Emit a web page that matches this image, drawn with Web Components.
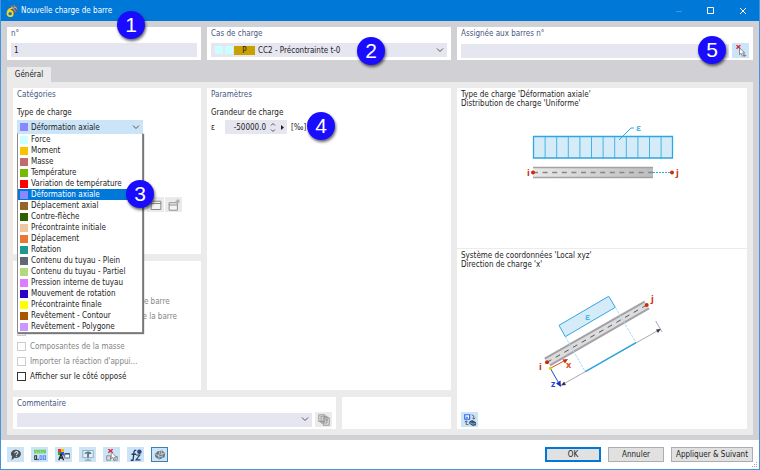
<!DOCTYPE html>
<html lang="fr">
<head>
<meta charset="utf-8">
<title>Nouvelle charge de barre</title>
<style>
  body {
    margin: 0;
    font: 8px/11px "DejaVu Sans Condensed", "Noto Sans", sans-serif;
    color: #1c1c1c;
  }
</style>
</head>
<body>
<load-dialog></load-dialog>

<script>
const ICONS = {
  app: `<path d="M5 3l4-3 6 2 1 5-4 4-5-3z" fill="#5a616b"/><path d="M7 1l6 8M10 0l5 6M5 5l9-2" stroke="#b9bec8"/><path d="M7 3C3 4 1 7 1 10.500a3.500 3.500 0 1 0 3.500-3.500C3 7 2 8 1.500 9" transform="translate(1 1)" fill="none" stroke="#ffd21f" stroke-width="2.400"/>`,
  pick: `<path d="M2 0l5 5M7 0L2 5" stroke="#e0263a" stroke-width="1.800"/><path d="M6 4v9l2-2 2 4 2-1-2-3.500h3z" fill="#fff" stroke="#6b6b6b"/><path d="M11 14h4M13 12v4" stroke="#777"/>`,
  help: `<path d="M8.500 1a6 5.500 0 1 1-2.500 10.500L2 15l.8-5A6 5.500 0 0 1 8.500 1z" fill="#4b5157"/><path d="M6.500 5.500c0-3 4.500-2.500 4 0-.3 1-2 1-2 2.500M8.500 9v1.300" fill="none" stroke="#e9f2f8" stroke-width="1.400"/>`,
  units: `<path d="M0 1h16v5H0z" fill="#74cf67"/><path d="M3 3v3M6 4v2M9 3v3M12 4v2" stroke="#b5ecae"/><path d="M1 9h2.500v5H1zM5.500 13v2" fill="none" stroke="#333" stroke-width="1.400"/><path d="M8 9h2.500v5H8zM12.800 9h2.500v5h-2.500z" fill="none" stroke="#5b8ef5" stroke-width="1.400"/>`,
  palette: `<path d="M0 0h4v4H0z" fill="#e33"/><path d="M4 0h4v4H4z" fill="#fb0"/><path d="M0 4h4v4H0z" fill="#2a3"/><path d="M4 4h4v4H4z" fill="#35e"/><path d="M1 15l3-8 3.500 8M2 12h5" fill="none" stroke="#222" stroke-width="1.700"/><path d="M9 6h6.500v6H9z" fill="#fff" stroke="#445"/><path d="M9 6.500h6.500" stroke="#358" stroke-width="2"/><path d="M6 9h3" stroke="#445"/>`,
  display: `<path d="M1 2h14v9.500H1z" fill="#e4eff6" stroke="#8497a5"/><path d="M8 12v3M4 15h8" stroke="#8497a5" stroke-width="1.300"/><path d="M3 7c1-4 7-5 10-1l-3 1c-2-2-5-1-7 0z" fill="#4c7e9f"/><path d="M8 6v5" stroke="#345" stroke-width="1.800"/>`,
  results: `<path d="M3 0l6 5M9 0L3 5" stroke="#e0263a" stroke-width="1.800"/><path d="M1 9h5v6H1zM10 10h5v5h-5z" fill="#ddd" stroke="#777"/><path d="M7 4v9l2-2 2 4 1.500-1-1.500-3h3z" fill="#fff" stroke="#777"/>`,
  formula: `<path d="M8.500 2C4 0 5.500 8 4 15H1M2 7h6" fill="none" stroke="#223a60" stroke-width="1.700"/><path d="M8 8h5l-5 6.500h6" fill="none" stroke="#223a60" stroke-width="1.500"/><circle cx="12.500" cy="3.500" r="3" fill="#34447c"/>`,
  render: `<path d="M1 7l4-4 6-1 4 4-1 5-7 3-5-3z" fill="#6a727a"/><path d="M2 7l4 2 1 4M6 9l2-6M6 9l6 2M8 7l6-1M10 3l1 6" fill="none" stroke="#dfe8ee"/>`,
  open: `<path d="M1.500 3h13v11h-13zM1.500 6h13" fill="#f4f4f4" stroke="#858585" stroke-width="1.300"/>`,
  create: `<path d="M1.500 5h11v10h-11zM1.500 8h11" fill="#f4f4f4" stroke="#8d8d8d" stroke-width="1.300"/><path d="M13 0v6M10 3h6M11 1l4 4M15 1l-4 4" stroke="#a2a2a2"/>`,
  copy: `<path d="M1 1h8v9H1zM4 3h8v9H4zM7 5h8v10H7z" fill="#dcdcdc" stroke="#858585"/><path d="M9 8h4" stroke="#858585"/>`,
  swap: `<path d="M1 1h6.500v6H1z" fill="#fff" stroke="#2f66f2" stroke-width="1.600"/><path d="M2 6l2-3 2 3z" fill="#2f66f2"/><path d="M10 1l3 1.500v4M11 5l2 2 2-2M3 9v5h3M1 11l2-2 2 2" fill="none" stroke="#444"/><path d="M7 10l4-2 5 3v4l-4 1-5-3z" fill="#36527c"/><path d="M8 11.500l4 2 3-1" stroke="#b4c8df"/>`
};

const CHEVRON = `<svg class="chevron" viewBox="0 0 8 5" width="8" height="5"><path d="M1 .5l3 3 3-3" fill="none" stroke="#555"/></svg>`;

const LOAD_TYPES = [
  ['Force', '#ccffff'],
  ['Moment', '#f8c200'],
  ['Masse', '#bf6d6d'],
  ['Température', '#77b900'],
  ['Variation de température', '#ff0000'],
  ['Déformation axiale', '#8a88ff'],
  ['Déplacement axial', '#94622a'],
  ['Contre-flèche', '#2f6000'],
  ['Précontrainte initiale', '#efc69e'],
  ['Déplacement', '#ea7633'],
  ['Rotation', '#1f998d'],
  ['Contenu du tuyau - Plein', '#616872'],
  ['Contenu du tuyau - Partiel', '#b2da7c'],
  ['Pression interne de tuyau', '#e07aff'],
  ['Mouvement de rotation', '#2c00c8'],
  ['Précontrainte finale', '#ffff00'],
  ['Revêtement - Contour', '#a65700'],
  ['Revêtement - Polygone', '#c898ff']
];

const FIELD_CSS = `
  * { box-sizing: border-box; }
  input, select {
    appearance: none;
    flex: 1;
    min-width: 0;
    height: 14px;
    margin: 0;
    padding: 0 3px;
    border: 0;
    border-radius: 0;
    outline: 0;
    background: #e6e6f1;
    color: inherit;
    font: inherit;
  }
  .field { display: flex; align-items: center; height: 14px; background: #e6e6f1; }
  .field select { background: transparent; }
  .chevron { flex: none; margin-right: 3px; }
`;

class GroupCard extends HTMLElement {
  constructor() {
    super();
    this.attachShadow({ mode: 'open' });
  }

  connectedCallback() {
    const heading = this.getAttribute('heading');
    this.shadowRoot.innerHTML = `
      <style>
        :host { display: block; padding: 1px 4px 3px; background: #fff; }
        h2 { margin: 0 0 3px; font: inherit; color: #46587f; }
      </style>
      ${heading ? `<h2>${heading}</h2>` : ''}
      <slot></slot>
    `;
  }
}

class IconButton extends HTMLElement {
  constructor() {
    super();
    this.attachShadow({ mode: 'open' });
  }

  connectedCallback() {
    const disabled = this.hasAttribute('disabled');
    this.shadowRoot.innerHTML = `
      <style>
        :host { display: block; flex: none; }
        button {
          display: grid;
          place-items: center;
          box-sizing: border-box;
          width: 17px;
          height: 15px;
          padding: 0;
          border: 0;
          background: #cce4f7;
        }
        button:disabled { background: #ebebeb; }
        :host([pressed]) button { border: 1px solid #3c7fb1; }
        svg { display: block; }
      </style>
      <button type="button" aria-label="${this.getAttribute('label')}" ${disabled ? 'disabled' : ''}>
        <svg viewBox="0 0 16 16" width="12" height="12" fill="none">${ICONS[this.getAttribute('icon')]}</svg>
      </button>
    `;
  }
}

class PushButton extends HTMLElement {
  constructor() {
    super();
    this.attachShadow({ mode: 'open' });
    this.shadowRoot.innerHTML = `
      <style>
        :host { display: block; }
        button {
          box-sizing: border-box;
          min-width: 56px;
          height: 15px;
          padding: 0 4px;
          border: 1px solid #adadad;
          background: #e1e1e1;
          color: inherit;
          font: inherit;
          white-space: nowrap;
        }
        :host([default]) button { border-color: #0078d7; outline: 1px solid #0078d7; outline-offset: -2px; }
      </style>
      <button type="button"><slot></slot></button>
    `;
  }
}

class CheckRow extends HTMLElement {
  constructor() {
    super();
    this.attachShadow({ mode: 'open' });
  }

  connectedCallback() {
    const disabled = this.hasAttribute('disabled');
    this.shadowRoot.innerHTML = `
      <style>
        :host { display: block; height: 15px; }
        label { display: flex; align-items: center; gap: 4px; height: 15px; white-space: nowrap; }
        input {
          appearance: none;
          box-sizing: border-box;
          width: 9px;
          height: 9px;
          margin: 0;
          border: 1px solid #333;
          background: #fff;
        }
        :host([disabled]) label { color: #858585; }
        :host([disabled]) input { border-color: #ccc; }
      </style>
      <label><input type="checkbox" ${disabled ? 'disabled' : ''}><slot></slot></label>
    `;
  }
}

class TypeSelect extends HTMLElement {
  constructor() {
    super();
    this.attachShadow({ mode: 'open' });
  }

  connectedCallback() {
    const value = this.getAttribute('value');
    const color = LOAD_TYPES.find(([name]) => name === value)[1];
    this.shadowRoot.innerHTML = `
      <style>
        ${FIELD_CSS}
        :host { display: block; }
        label { display: block; margin-bottom: 2px; }
        .box { position: relative; width: 126px; }
        .field { background: #cce4f7; }
        .swatch { flex: none; width: 8px; height: 8px; margin: 0 0 0 3px; }
        ul {
          position: absolute;
          z-index: 2;
          top: 13px;
          left: 0;
          width: 126px;
          margin: 0;
          padding: 0;
          border: 1px solid #8a8a8a;
          border-top-color: #cce4f7;
          background: #fff;
          box-shadow: 1px 1px 1px #777;
          list-style: none;
        }
        li { display: flex; align-items: center; gap: 3px; height: 11px; white-space: nowrap; }
        li .swatch { margin-left: 2px; }
        li[aria-selected="true"] { background: #0078d7; color: #fff; }
      </style>
      <label for="type">Type de charge</label>
      <div class="box">
        <div class="field">
          <span class="swatch" style="background:${color}"></span>
          <select id="type"><option>${value}</option></select>
          ${CHEVRON}
        </div>
        <ul role="listbox" aria-label="Type de charge">
          ${LOAD_TYPES.map(([name, c]) => `
            <li role="option" aria-selected="${name === value}"><span class="swatch" style="background:${c}"></span>${name}</li>
          `).join('')}
        </ul>
      </div>
    `;
  }
}

class CallOut extends HTMLElement {
  constructor() {
    super();
    this.attachShadow({ mode: 'open' });
    this.shadowRoot.innerHTML = `
      <style>
        :host {
          position: absolute;
          z-index: 5;
          display: grid;
          place-items: center;
          width: 28px;
          height: 28px;
          border-radius: 50%;
          background: #1a0dff;
          box-shadow: 1px 2px 3px rgba(0, 0, 0, .6);
          color: #fff;
          font: 21px/28px "Liberation Sans", Arial, sans-serif;
        }
      </style>
      <slot></slot>
    `;
  }
}

class UniformFigure extends HTMLElement {
  constructor() {
    super();
    this.attachShadow({ mode: 'open' });
    const cells = Array.from({ length: 11 }, (_, i) => `M${11.5 + (i + 1) * 11.6} 14.500v21.500`).join('');
    this.shadowRoot.innerHTML = `
      <style>
        :host { display: block; }
        svg { display: block; margin: 0 auto; }
        text { font: bold 9px "Open Sans", sans-serif; }
      </style>
      <svg width="160" height="68" viewBox="0 -6 160 68">
        <defs>
          <linearGradient id="steel"><stop offset="0" stop-color="#e8e8e8"/><stop offset="1" stop-color="#bdbdbd"/></linearGradient>
        </defs>
        <path d="M11.500 14.500h139v21.500h-139z" fill="#d5ecf8"/>
        <path d="${cells}" stroke="#45b3e6"/>
        <path d="M11.500 14.500h139v21.500h-139z" fill="none" stroke="#2ea7e0" stroke-width="1.300"/>
        <path d="M97 18L109 6h3" fill="none" stroke="#2ea7e0"/>
        <text x="114" y="9" fill="#45b3e6">ε</text>
        <path d="M11 45h120v11H11z" fill="url(#steel)"/>
        <path d="M11 45.500h120M11 55.500h120" stroke="#a2a2a6" stroke-width="1.500"/>
        <path d="M11 50.500h120" stroke="#85858c" stroke-width="1.500" stroke-dasharray="5 4.600"/>
        <path d="M131 50.500h19" stroke="#2ea7e0" stroke-dasharray="2 1"/>
        <circle cx="11" cy="50.500" r="2" fill="#cc2b0a"/>
        <circle cx="150" cy="50.500" r="2" fill="#cc2b0a"/>
        <text x="5" y="54" fill="#cc2b0a">i</text>
        <text x="154" y="54" fill="#cc2b0a">j</text>
      </svg>
    `;
  }
}

class DirectionFigure extends HTMLElement {
  constructor() {
    super();
    this.attachShadow({ mode: 'open' });
    this.shadowRoot.innerHTML = `
      <style>
        :host { display: block; }
        svg { display: block; margin: 0 auto; }
        text { font: bold 9px "Open Sans", sans-serif; }
      </style>
      <svg width="140" height="110" viewBox="0 0 140 110" fill="none">
        <path d="M27 40.300L76.700 11.300l6.600 11-50 29.400z" fill="#d5ecf8" stroke="#2ea7e0"/>
        <text x="53" y="35" fill="#45b3e6">ε</text>
        <path d="M12.700 73.700l100-57 4.300 6.600-99 57z" fill="#dcdcdc"/>
        <path d="M12.700 73.700l100-57M18 80.300l99-57" stroke="#a2a2a8" stroke-width="2"/>
        <path d="M15 77.300L114.700 20" stroke="#55555f" stroke-dasharray="5 5"/>
        <path d="M33.300 51.700l20 35M83.300 22.300l20.700 35.400" stroke="#a9dbf3" stroke-dasharray="3 1"/>
        <path d="M29.700 100l99-56M123.700 36l6.300 11" stroke="#a9a9b0"/>
        <path d="M53.300 86.700l50.700-29" stroke="#2ea7e0" stroke-width="1.500"/>
        <path d="M128.700 44l-4.700.5 2 3.500zM29 100.500l3-4 2 3.500z" fill="#333348"/>
        <path d="M18.300 83.300l14-7.500" stroke="#e04a1c"/>
        <path d="M36 74l-5.500.500 2.500 4z" fill="#cc2b0a"/>
        <path d="M18.300 83.300l8 14" stroke="#2343d6"/>
        <path d="M29 102l-.5-6.500-4.500 3z" fill="#1a2fc0"/>
        <circle cx="15" cy="77.300" r="2" fill="#cc2b0a"/>
        <circle cx="114.700" cy="20" r="2" fill="#cc2b0a"/>
        <circle cx="18.300" cy="83.300" r="1.500" fill="#d7d700"/>
        <text x="7" y="85" fill="#cc2b0a">i</text>
        <text x="119" y="17" fill="#cc2b0a">j</text>
        <text x="34" y="83" fill="#e04a1c">x</text>
        <text x="19" y="102" fill="#2343d6">z</text>
      </svg>
    `;
  }
}

class LoadDialog extends HTMLElement {
  constructor() {
    super();
    this.attachShadow({ mode: 'open' });
    this.shadowRoot.innerHTML = `
      <style>
        ${FIELD_CSS}
        :host {
          position: relative;
          display: flex;
          flex-direction: column;
          box-sizing: border-box;
          min-height: 100vh;
          border: 1px solid #4297dc;
          border-top: 0;
          background: #d1d0d5;
        }
        header {
          display: flex;
          align-items: center;
          gap: 3px;
          height: 21px;
          padding: 0 12px 0 5px;
          background: #0078d7;
          color: #fff;
        }
        h1 { flex: 1; margin: 0; font: inherit; }
        .controls { display: flex; gap: 24px; }
        .controls button { display: block; width: 8px; height: 8px; padding: 0; border: 0; background: none; }
        .controls svg { display: block; }
        .top {
          display: grid;
          grid-template-columns: 194fr 244fr 296fr;
          gap: 6px;
          padding: 6px 6px 7px;
        }
        .top group-card { height: 33px; }
        .top label { display: block; height: 11px; margin-bottom: 4px; color: #46587f; }
        .row { display: flex; align-items: center; gap: 3px; }
        .square { flex: none; width: 8px; height: 8px; background: #ccffff; margin-left: 4px; }
        .square + .square { margin-left: 2px; }
        .code { flex: none; width: 21px; height: 9px; margin: 0 0 0 1px; background: #c8a000; line-height: 9px; text-align: center; }
        nav { display: flex; padding: 0 6px; }
        nav button { height: 15px; width: 44px; padding: 0; border: 0; background: #ebebeb; color: inherit; font: inherit; }
        main {
          flex: 1;
          display: grid;
          grid-template-columns: 438fr 290fr;
          gap: 6px;
          margin: 0 6px;
          padding: 6px;
          background: #ebebeb;
        }
        .left { display: flex; flex-direction: column; gap: 7px; }
        .panes { flex: 1; display: grid; grid-template-columns: 188fr 244fr; gap: 6px; }
        .stack { display: flex; flex-direction: column; gap: 7px; }
        .stack group-card:first-child { flex: 1; }
        .type { margin-top: 7px; }
        .tools { display: flex; justify-content: flex-end; gap: 1px; margin-top: 63px; padding-right: 15px; }
        .checks { margin-top: 21px; padding-bottom: 3px; }
        .size { margin: 7px 0 0; }
        .value { display: flex; align-items: center; margin-top: 2px; }
        .value label { width: 14px; }
        .value .field { width: 62px; }
        .value input { text-align: right; }
        .value span { margin-left: 4px; }
        .bottom { display: grid; grid-template-columns: 323fr 109fr; gap: 6px; }
        .comment { height: 32px; }
        .comment .field { flex: 1; }
        .info { display: grid; grid-template-rows: 160fr 181fr; background: #fff; }
        .info section { padding: 2px 4px; line-height: 9px; }
        .info section + section { display: flex; flex-direction: column; border-top: 1px solid #ebebeb; }
        .info p { margin: 0; }
        uniform-figure { margin-top: 8px; }
        direction-figure { margin: 16px 0 auto; }
        footer {
          display: flex;
          align-items: center;
          gap: 7px;
          height: 29px;
          margin-top: 5px;
          padding: 0 6px;
          background: #fff;
        }
        .spacer { flex: 1; }
        .grip { position: absolute; right: 0; bottom: 0; }
      </style>

      <header>
        <svg viewBox="0 0 16 16" width="12" height="12" fill="none">${ICONS.app}</svg>
        <h1>Nouvelle charge de barre</h1>
        <div class="controls">
          <button type="button" aria-label="Réduire"><svg viewBox="0 0 8 8" width="8" height="8"><path d="M1 4.500h6" stroke="#3c98e2"/></svg></button>
          <button type="button" aria-label="Agrandir"><svg viewBox="0 0 8 8" width="8" height="8"><path d="M.5 .5h6v6h-6z" fill="none" stroke="#fff"/></svg></button>
          <button type="button" aria-label="Fermer"><svg viewBox="0 0 8 8" width="8" height="8"><path d="M1 1l6 6M7 1L1 7" stroke="#fff"/></svg></button>
        </div>
      </header>

      <div class="top">
        <group-card>
          <label for="no">n°</label>
          <div class="row"><input id="no" value="1"></div>
        </group-card>
        <group-card>
          <label for="case">Cas de charge</label>
          <div class="field">
            <span class="square"></span><span class="square"></span><span class="code">P</span>
            <select id="case"><option>CC2 - Précontrainte t-0</option></select>
            ${CHEVRON}
          </div>
        </group-card>
        <group-card>
          <label for="members">Assignée aux barres n°</label>
          <div class="row"><input id="members"><icon-button icon="pick" label="Sélectionner les barres"></icon-button></div>
        </group-card>
      </div>

      <nav><button type="button">Général</button></nav>

      <main>
        <div class="left">
          <div class="panes">
            <div class="stack">
              <group-card heading="Catégories">
                <type-select class="type" value="Déformation axiale"></type-select>
                <div class="tools">
                  <icon-button icon="open" label="Ouvrir" disabled></icon-button>
                  <icon-button icon="create" label="Créer" disabled></icon-button>
                </div>
              </group-card>
              <group-card heading="Options">
                <div class="checks">
                  <check-row disabled>Référence à la distance de fin de barre</check-row>
                  <check-row disabled>Charge sur la longueur totale de la barre</check-row>
                  <check-row disabled>Excentrement</check-row>
                  <check-row disabled>Composantes de la masse</check-row>
                  <check-row disabled>Importer la réaction d'appui...</check-row>
                  <check-row>Afficher sur le côté opposé</check-row>
                </div>
              </group-card>
            </div>
            <group-card heading="Paramètres">
              <p class="size">Grandeur de charge</p>
              <div class="value">
                <label for="eps">ε</label>
                <div class="field">
                  <input id="eps" value="-50000.0">
                  <svg width="18" height="11" viewBox="0 0 18 11"><path d="M2 3.500l2-2 2 2M2 7.500l2 2 2-2" fill="none" stroke="#555"/><path d="M12 3l3 2.500-3 2.500z" fill="#222"/></svg>
                </div>
                <span>[‰]</span>
              </div>
            </group-card>
          </div>
          <div class="bottom">
            <group-card class="comment" heading="Commentaire">
              <div class="row">
                <div class="field"><select aria-label="Commentaire"></select>${CHEVRON}</div>
                <icon-button icon="copy" label="Commentaires" disabled></icon-button>
              </div>
            </group-card>
            <group-card></group-card>
          </div>
        </div>
        <div class="info">
          <section>
            <p>Type de charge 'Déformation axiale'</p>
            <p>Distribution de charge 'Uniforme'</p>
            <uniform-figure></uniform-figure>
          </section>
          <section>
            <p>Système de coordonnées 'Local xyz'</p>
            <p>Direction de charge 'x'</p>
            <direction-figure></direction-figure>
            <icon-button icon="swap" label="Changer d'image"></icon-button>
          </section>
        </div>
      </main>

      <footer>
        <icon-button icon="help" label="Aide"></icon-button>
        <icon-button icon="units" label="Unités"></icon-button>
        <icon-button icon="palette" label="Couleurs"></icon-button>
        <icon-button icon="display" label="Affichage"></icon-button>
        <icon-button icon="results" label="Sélection"></icon-button>
        <icon-button icon="formula" label="Formule"></icon-button>
        <icon-button icon="render" label="Rendu" pressed></icon-button>
        <span class="spacer"></span>
        <push-button default>OK</push-button>
        <push-button>Annuler</push-button>
        <push-button>Appliquer &amp; Suivant</push-button>
      </footer>
      <svg class="grip" width="7" height="7" viewBox="0 0 7 7"><path d="M4 0h1v1H4zM2 2h1v1H2zM4 2h1v1H4zM0 4h1v1H0zM2 4h1v1H2zM4 4h1v1H4z" fill="#aaa"/></svg>

      <call-out style="left:116px;top:11px">1</call-out>
      <call-out style="left:356px;top:37px">2</call-out>
      <call-out style="left:125px;top:180px">3</call-out>
      <call-out style="left:306px;top:112px">4</call-out>
      <call-out style="right:33px;top:36px">5</call-out>
    `;
  }
}

customElements.define('group-card', GroupCard);
customElements.define('icon-button', IconButton);
customElements.define('push-button', PushButton);
customElements.define('check-row', CheckRow);
customElements.define('type-select', TypeSelect);
customElements.define('call-out', CallOut);
customElements.define('uniform-figure', UniformFigure);
customElements.define('direction-figure', DirectionFigure);
customElements.define('load-dialog', LoadDialog);
</script>
</body>
</html>
